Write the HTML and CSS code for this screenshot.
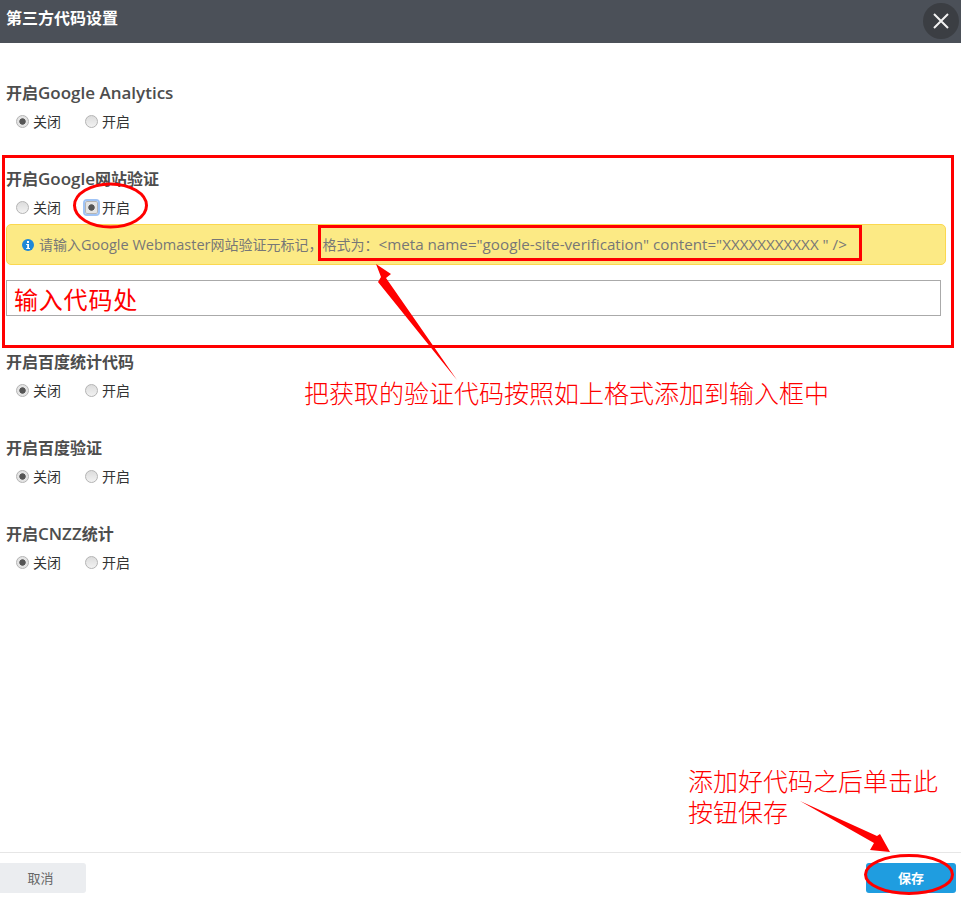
FILE: index.html
```html
<!DOCTYPE html>
<html lang="zh-CN">
<head>
    <meta charset="UTF-8">
    <meta name="viewport" content="width=device-width, initial-scale=1.0">
    <title>第三方代码设置</title>
    <link rel="stylesheet" href="styles.css">
</head>
<body>
    <div class="dialog">
        <div class="dialog-header">
            <div class="dialog-title">第三方代码设置</div>
            <button class="close-btn" aria-label="关闭">
                <svg width="16" height="16" viewBox="0 0 16 16"><path d="M1 1L15 15M15 1L1 15" stroke="#f2f2f2" stroke-width="2" fill="none"/></svg>
            </button>
        </div>

        <div class="dialog-body">
            <div class="setting">
                <div class="setting-label">开启<span class="label-latin">Google Analytics</span></div>
                <div class="radio-row">
                    <label class="radio-item"><input type="radio" name="ga" checked>关闭</label>
                    <label class="radio-item"><input type="radio" name="ga">开启</label>
                </div>
            </div>

            <div class="setting">
                <div class="setting-label">开启<span class="label-latin">Google</span>网站验证</div>
                <div class="radio-row">
                    <label class="radio-item"><input type="radio" name="gv">关闭</label>
                    <label class="radio-item"><input class="focused" type="radio" name="gv" checked>开启</label>
                </div>
                <div class="notice">
                    <svg class="notice-icon" width="12" height="12" viewBox="0 0 12 12">
                        <circle cx="6" cy="6" r="6" fill="#1e88d8"/>
                        <rect x="5" y="2" width="2" height="2" fill="#fff"/>
                        <path d="M4.2 5H7V9H8V10H4.2V9H5.2V6H4.2Z" fill="#fff"/>
                    </svg>
                    <span class="notice-text">请输入<span class="notice-latin">Google Webmaster</span>网站验证元标记，格式为：<span class="notice-code">&lt;meta name="google-site-verification" content="XXXXXXXXXXX " /&gt;</span></span>
                </div>
                <input class="code-input" type="text" value="输入代码处">
            </div>

            <div class="setting">
                <div class="setting-label">开启百度统计代码</div>
                <div class="radio-row">
                    <label class="radio-item"><input type="radio" name="bd" checked>关闭</label>
                    <label class="radio-item"><input type="radio" name="bd">开启</label>
                </div>
            </div>

            <div class="setting">
                <div class="setting-label">开启百度验证</div>
                <div class="radio-row">
                    <label class="radio-item"><input type="radio" name="bv" checked>关闭</label>
                    <label class="radio-item"><input type="radio" name="bv">开启</label>
                </div>
            </div>

            <div class="setting">
                <div class="setting-label">开启<span class="label-latin">CNZZ</span>统计</div>
                <div class="radio-row">
                    <label class="radio-item"><input type="radio" name="cz" checked>关闭</label>
                    <label class="radio-item"><input type="radio" name="cz">开启</label>
                </div>
            </div>
        </div>

        <div class="dialog-footer">
            <button class="btn btn-cancel">取消</button>
            <button class="btn btn-save">保存</button>
        </div>
    </div>

    <!-- Red markup drawn over the screenshot -->
    <svg class="markup" width="961" height="898" viewBox="0 0 961 898">
        <g fill="none" stroke="#f00" stroke-width="3">
            <rect x="3.5" y="156.5" width="949" height="190"/>
            <rect x="319.5" y="226.5" width="541" height="33"/>
            <ellipse cx="110.5" cy="205.5" rx="36" ry="21.5"/>
            <ellipse cx="909" cy="874.5" rx="43.5" ry="19"/>
        </g>
        <polygon fill="#f00" points="376,264 391,274 386,278 457,380 378,282 381,277"/>
        <polygon fill="#f00" points="800,801 877,836 880,834 890,852 870,850 874,843"/>
    </svg>
    <div class="note note-verify">把获取的验证代码按照如上格式添加到输入框中</div>
    <div class="note note-save">添加好代码之后单击此<br>按钮保存</div>
</body>
</html>
```

FILE: styles.css
```css
* {
    box-sizing: border-box;
}
html, body {
    margin: 0;
    height: 898px;
    overflow: hidden;
}
body {
    position: relative;
    font-family: "Open Sans", "Noto Sans CJK SC", sans-serif;
    background: #fff;
    color: #333;
}
.dialog {
    display: flex;
    flex-direction: column;
    height: 898px;
}
.dialog-header {
    display: flex;
    justify-content: space-between;
    height: 43px;
    flex: none;
    padding: 3px 2px 0 6px;
    background: #4b5058;
}
.dialog-title {
    color: #fff;
    font-size: 16px;
    font-weight: bold;
    line-height: 30px;
}
.close-btn {
    display: flex;
    align-items: center;
    justify-content: center;
    width: 36px;
    height: 36px;
    padding: 0;
    border: none;
    border-radius: 50%;
    background: #3b3e43;
}
.dialog-body {
    flex: 1;
    padding: 40px 6px 0;
}
.setting {
    margin-bottom: 37px;
}
.setting-label {
    color: #4d4d4d;
    font-size: 16px;
    font-weight: 600;
    line-height: 20px;
}
.label-latin {
    font-size: 17px;
}
.radio-row {
    display: flex;
    gap: 24px;
    height: 20px;
    margin-top: 9px;
    padding-left: 10px;
}
.radio-item {
    display: flex;
    align-items: center;
    gap: 4px;
    font-size: 14px;
    line-height: 20px;
}
.radio-item input {
    appearance: none;
    width: 13px;
    height: 13px;
    margin: -2px 0 0;
    border: 1px solid #b4b4b4;
    border-radius: 50%;
    background: linear-gradient(#dcdcdc, #f2f2f2);
}
.radio-item input:checked {
    background: radial-gradient(circle, #555 0, #555 2.8px, #e4e4e4 3.6px);
}
.radio-item input.focused {
    outline: 2px solid #9fc3f5;
    outline-offset: 0;
    border-radius: 2px;
}
.notice {
    display: flex;
    align-items: center;
    gap: 5px;
    width: 940px;
    height: 41px;
    margin-top: 6px;
    padding-left: 15px;
    border: 1px solid #fbd84f;
    border-radius: 5px;
    background: #fcea85;
    color: #777;
    font-size: 14px;
    white-space: nowrap;
}
.notice-icon {
    flex: none;
}
.notice-text {
    margin-top: -2px;
}
.notice-latin {
    font-size: 14.5px;
}
.notice-code {
    font-size: 15.2px;
}
.code-input {
    display: block;
    width: 935px;
    height: 36px;
    margin-top: 15px;
    margin-bottom: -1px;
    padding: 1px 7px 0;
    border: 1px solid #aaa;
    border-radius: 0;
    outline: none;
    color: #f00;
    font-family: "Noto Sans CJK SC", sans-serif;
    font-size: 24px;
    letter-spacing: 0.8px;
}
.dialog-footer {
    display: flex;
    justify-content: space-between;
    height: 46px;
    flex: none;
    padding: 10px 5px 0;
    border-top: 1px solid #e6e6e6;
}
.btn {
    height: 30px;
    padding: 0 0 2px;
    border: none;
    border-radius: 3px;
    font-family: "Noto Sans CJK SC", sans-serif;
    font-size: 13px;
}
.btn-cancel {
    width: 91px;
    margin-left: -10px;
    background: #ebedf0;
    color: #666;
}
.btn-save {
    width: 90px;
    background: #1f9de0;
    color: #fff;
    font-weight: bold;
}
.markup {
    position: absolute;
    top: 0;
    left: 0;
    pointer-events: none;
}
.note {
    position: absolute;
    color: #f00;
    font-family: "Noto Sans CJK SC", sans-serif;
    font-size: 25px;
    font-weight: 300;
    line-height: 31px;
    white-space: nowrap;
}
.note-verify {
    top: 377px;
    left: 304px;
}
.note-save {
    top: 765px;
    left: 688px;
}
```
